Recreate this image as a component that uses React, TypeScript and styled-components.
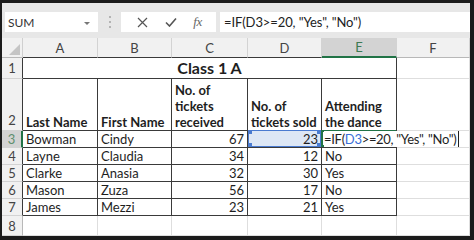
import React from 'react'
import styled, { createGlobalStyle } from 'styled-components'

const GlobalStyle = createGlobalStyle`
  html, body {
    margin: 0;
    padding: 0;
    background: #1b1b1b;
  }
  body {
    font-family: Lato, "Open Sans", Arial, sans-serif;
  }
`

const Frame = styled.div`
  width: 474px;
  height: 240px;
  box-sizing: border-box;
  padding: 3px 4px 4px 2px;
  background: #1b1b1b;
`

const Window = styled.div`
  height: 100%;
  display: flex;
  flex-direction: column;
  background: #fff;
  overflow: hidden;
`

const FormulaBar = styled.div`
  height: 35px;
  flex: none;
  display: flex;
  align-items: flex-start;
  box-sizing: border-box;
  padding: 9px 0 0 3px;
  background: #e7e7e7;
`

const Box = styled.div`
  height: 20px;
  background: #fff;
  display: flex;
  align-items: center;
  box-sizing: border-box;
`

const NameBox = styled(Box)`
  width: 93px;
  padding: 0 8px 0 3px;
  justify-content: space-between;
  font-size: 12px;
  color: #333;
`

const Caret = styled.span`
  width: 0;
  height: 0;
  border-left: 3px solid transparent;
  border-right: 3px solid transparent;
  border-top: 3px solid #777;
  margin-top: 2px;
`

const Grip = styled.div`
  width: 23px;
  height: 20px;
  display: flex;
  flex-direction: column;
  align-items: center;
  justify-content: center;
  gap: 3px;
  span {
    width: 2px;
    height: 2px;
    background: #b3b3b3;
  }
`

const ButtonsBox = styled(Box)`
  width: 95px;
  justify-content: space-around;
  padding: 0 6px 0 8px;
  color: #555;
`

const Fx = styled.span`
  font-family: "Liberation Serif", serif;
  font-style: italic;
  font-size: 13px;
  color: #666;
  letter-spacing: -0.5px;
`

const FormulaInput = styled(Box)`
  flex: 1;
  margin-left: 4px;
  padding-left: 4px;
  font-size: 13px;
  color: #222;
  white-space: nowrap;
  letter-spacing: -0.1px;
`

const Sheet = styled.div`
  flex: 1;
  display: grid;
  grid-template-columns: 21px 75px 74px 76px 74px 75px 73px;
  grid-template-rows: 20px 21px 52px repeat(5, 17px) 20px;
  font-size: 13px;
  color: #1e1e1e;
`

const Corner = styled.div`
  background: #f1f1f1;
  border-right: 1px solid #d0d0d0;
  border-bottom: 1px solid #b8b8b8;
  position: relative;
  &::after {
    content: '';
    position: absolute;
    right: 2px;
    bottom: 2px;
    width: 0;
    height: 0;
    border-left: 11px solid transparent;
    border-bottom: 11px solid #c5c5c5;
  }
`

const ColHead = styled.div<{ $sel?: boolean; $edge?: boolean }>`
  display: flex;
  align-items: center;
  justify-content: center;
  box-sizing: border-box;
  background: ${({ $sel }) => ($sel ? '#d3d3d3' : '#f1f1f1')};
  color: ${({ $sel }) => ($sel ? '#3c7a52' : '#444')};
  border-right: 1px solid #d3d3d3;
  border-bottom: ${({ $sel, $edge }) =>
    $sel ? '2px solid #217346' : $edge ? '1px solid #3a3a3a' : '1px solid #b8b8b8'};
`

const RowHead = styled.div<{ $sel?: boolean; $edge?: boolean; $bottom?: boolean }>`
  display: flex;
  justify-content: center;
  align-items: ${({ $bottom }) => ($bottom ? 'flex-end' : 'center')};
  box-sizing: border-box;
  padding-bottom: ${({ $bottom }) => ($bottom ? '2px' : '0')};
  background: ${({ $sel }) => ($sel ? '#d3d3d3' : '#f1f1f1')};
  color: ${({ $sel }) => ($sel ? '#5f8f6e' : '#444')};
  border-bottom: 1px solid #d3d3d3;
  border-right: ${({ $sel, $edge }) =>
    $sel ? '2px solid #217346' : $edge ? '1px solid #3a3a3a' : '1px solid #b8b8b8'};
`

const Cell = styled.div<{
  $boxed?: boolean
  $span?: number
  $align?: 'left' | 'right' | 'center'
  $bold?: boolean
  $wrap?: boolean
}>`
  grid-column: span ${({ $span }) => $span || 1};
  box-sizing: border-box;
  display: flex;
  align-items: flex-end;
  justify-content: ${({ $align }) =>
    $align === 'right' ? 'flex-end' : $align === 'center' ? 'center' : 'flex-start'};
  padding: 0 3px 0 3px;
  border-right: 1px solid ${({ $boxed }) => ($boxed ? '#3a3a3a' : '#dedede')};
  border-bottom: 1px solid ${({ $boxed }) => ($boxed ? '#3a3a3a' : '#dedede')};
  font-weight: ${({ $bold }) => ($bold ? 700 : 400)};
  line-height: 16px;
  white-space: ${({ $wrap }) => ($wrap ? 'normal' : 'nowrap')};
`

const Title = styled(Cell)`
  align-items: center;
  font-size: 16px;
`

const RefCell = styled(Cell)`
  position: relative;
  background: #dde7f5;
  &::after {
    content: '';
    position: absolute;
    inset: -1px 0 0 0;
    border: 1px solid #4a7bd0;
    background:
      linear-gradient(#4a7bd0, #4a7bd0) left top / 3px 3px no-repeat,
      linear-gradient(#4a7bd0, #4a7bd0) right top / 3px 3px no-repeat,
      linear-gradient(#4a7bd0, #4a7bd0) left bottom / 3px 3px no-repeat,
      linear-gradient(#4a7bd0, #4a7bd0) right bottom / 3px 3px no-repeat;
  }
`

const ActiveCell = styled(Cell)`
  position: relative;
  z-index: 2;
  overflow: visible;
  padding-left: 2px;
  &::before {
    content: '';
    position: absolute;
    inset: -1px 0 0 -1px;
    border: 2px solid #217346;
    border-right: none;
    pointer-events: none;
  }
`

const EditText = styled.span`
  background: #fff;
  padding-right: 2px;
  border-right: 1px solid #222;
  position: relative;
  z-index: 1;
  letter-spacing: -0.3px;
`

const RefText = styled.span`
  color: #3a6fd8;
`

const XIcon = () => (
  <svg width="11" height="11" viewBox="0 0 11 11">
    <path d="M1 1 L10 10 M10 1 L1 10" stroke="#555" strokeWidth="1.2" fill="none" />
  </svg>
)

const CheckIcon = () => (
  <svg width="12" height="10" viewBox="0 0 12 10">
    <path d="M1 5.5 L4.5 9 L11 1.5" stroke="#555" strokeWidth="1.6" fill="none" />
  </svg>
)

const cols = ['A', 'B', 'C', 'D', 'E', 'F']

const rows = [
  ['Layne', 'Claudia', '34', '12', 'No'],
  ['Clarke', 'Anasia', '32', '30', 'Yes'],
  ['Mason', 'Zuza', '56', '17', 'No'],
  ['James', 'Mezzi', '23', '21', 'Yes'],
]

export default function App() {
  return (
    <Frame>
      <GlobalStyle />
      <Window>
        <FormulaBar>
          <NameBox>
            SUM
            <Caret />
          </NameBox>
          <Grip>
            <span />
            <span />
            <span />
          </Grip>
          <ButtonsBox>
            <XIcon />
            <CheckIcon />
            <Fx>fx</Fx>
          </ButtonsBox>
          <FormulaInput>=IF(D3&gt;=20, "Yes", "No")</FormulaInput>
        </FormulaBar>
        <Sheet>
          <Corner />
          {cols.map((c) => (
            <ColHead key={c} $sel={c === 'E'} $edge={c !== 'F'}>
              {c}
            </ColHead>
          ))}

          <RowHead $edge>1</RowHead>
          <Title $boxed $span={5} $align="center" $bold>
            Class 1 A
          </Title>
          <Cell />

          <RowHead $edge $bottom>
            2
          </RowHead>
          <Cell $boxed $bold>Last Name</Cell>
          <Cell $boxed $bold>First Name</Cell>
          <Cell $boxed $bold $wrap>
            No. of tickets received
          </Cell>
          <Cell $boxed $bold $wrap>
            No. of tickets sold
          </Cell>
          <Cell $boxed $bold $wrap>
            Attending the dance
          </Cell>
          <Cell />

          <RowHead $sel>3</RowHead>
          <Cell $boxed>Bowman</Cell>
          <Cell $boxed>Cindy</Cell>
          <Cell $boxed $align="right">67</Cell>
          <RefCell $boxed $align="right">23</RefCell>
          <ActiveCell $boxed>
            <EditText>
              =IF(<RefText>D3</RefText>&gt;=20, "Yes", "No")
            </EditText>
          </ActiveCell>
          <Cell />

          {rows.map((r, i) => (
            <React.Fragment key={r[0]}>
              <RowHead $edge>{i + 4}</RowHead>
              <Cell $boxed>{r[0]}</Cell>
              <Cell $boxed>{r[1]}</Cell>
              <Cell $boxed $align="right">{r[2]}</Cell>
              <Cell $boxed $align="right">{r[3]}</Cell>
              <Cell $boxed>{r[4]}</Cell>
              <Cell />
            </React.Fragment>
          ))}

          <RowHead>8</RowHead>
          {cols.map((c) => (
            <Cell key={c} />
          ))}
        </Sheet>
      </Window>
    </Frame>
  )
}
